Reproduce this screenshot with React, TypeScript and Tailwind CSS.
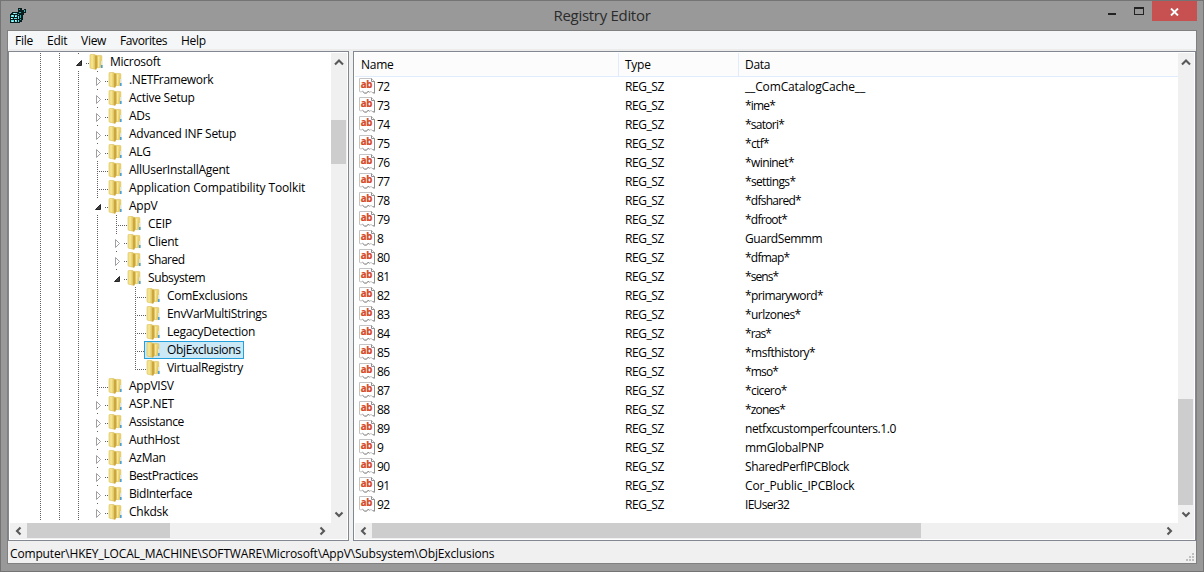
import React from "react";

type Kind = "open" | "closed" | "leaf";
type Node = { name: string; kind: Kind; guides: boolean[]; last?: boolean; tracking?: string };

const T = true;
const G2 = [T, T, T];
const G3 = [T, T, T, T];
const G4 = [T, T, T, T, false];

const nodes: Node[] = [
  { name: "Microsoft", kind: "open", guides: [T, T] },
  { name: ".NETFramework", kind: "closed", guides: G2, tracking: "tracking-[-0.36px]" },
  { name: "Active Setup", kind: "closed", guides: G2 },
  { name: "ADs", kind: "closed", guides: G2 },
  { name: "Advanced INF Setup", kind: "closed", guides: G2 },
  { name: "ALG", kind: "closed", guides: G2 },
  { name: "AllUserInstallAgent", kind: "leaf", guides: G2 },
  { name: "Application Compatibility Toolkit", kind: "leaf", guides: G2, tracking: "tracking-[-0.13px]" },
  { name: "AppV", kind: "open", guides: G2 },
  { name: "CEIP", kind: "leaf", guides: G3 },
  { name: "Client", kind: "closed", guides: G3 },
  { name: "Shared", kind: "closed", guides: G3, tracking: "tracking-[-0.5px]" },
  { name: "Subsystem", kind: "open", guides: G3, last: true, tracking: "tracking-[-0.4px]" },
  { name: "ComExclusions", kind: "leaf", guides: G4 },
  { name: "EnvVarMultiStrings", kind: "leaf", guides: G4, tracking: "tracking-[-0.32px]" },
  { name: "LegacyDetection", kind: "leaf", guides: G4 },
  { name: "ObjExclusions", kind: "leaf", guides: G4, tracking: "tracking-[-0.32px]" },
  { name: "VirtualRegistry", kind: "leaf", guides: G4, last: true, tracking: "tracking-[-0.34px]" },
  { name: "AppVISV", kind: "leaf", guides: G2 },
  { name: "ASP.NET", kind: "closed", guides: G2 },
  { name: "Assistance", kind: "closed", guides: G2, tracking: "tracking-[-0.36px]" },
  { name: "AuthHost", kind: "closed", guides: G2 },
  { name: "AzMan", kind: "closed", guides: G2 },
  { name: "BestPractices", kind: "closed", guides: G2, tracking: "tracking-[-0.45px]" },
  { name: "BidInterface", kind: "closed", guides: G2, tracking: "tracking-[-0.4px]" },
  { name: "Chkdsk", kind: "closed", guides: G2 },
];

const values: [string, string, string][] = [
  ["72", "__ComCatalogCache__", "tracking-[-0.15px]"],
  ["73", "*ime*", "tracking-[-0.8px]"],
  ["74", "*satori*", "tracking-[-0.75px]"],
  ["75", "*ctf*", "tracking-[-0.65px]"],
  ["76", "*wininet*", "tracking-[-0.6px]"],
  ["77", "*settings*", "tracking-[-0.65px]"],
  ["78", "*dfshared*", "tracking-[-0.75px]"],
  ["79", "*dfroot*", "tracking-[-0.75px]"],
  ["8", "GuardSemmm", "tracking-[-0.45px]"],
  ["80", "*dfmap*", "tracking-[-0.75px]"],
  ["81", "*sens*", "tracking-[-0.95px]"],
  ["82", "*primaryword*", "tracking-[-0.62px]"],
  ["83", "*urlzones*", "tracking-[-0.55px]"],
  ["84", "*ras*", "tracking-[-0.9px]"],
  ["85", "*msfthistory*", "tracking-[-0.52px]"],
  ["86", "*mso*", "tracking-[-0.85px]"],
  ["87", "*cicero*", "tracking-[-0.6px]"],
  ["88", "*zones*", "tracking-[-0.85px]"],
  ["89", "netfxcustomperfcounters.1.0", "tracking-[-0.43px]"],
  ["9", "mmGlobalPNP", "tracking-[-0.28px]"],
  ["90", "SharedPerfIPCBlock", "tracking-[-0.37px]"],
  ["91", "Cor_Public_IPCBlock", "tracking-[-0.14px]"],
  ["92", "IEUser32", "tracking-[-0.7px]"],
];

const dots = (from: number, to: number) => {
  const out: number[] = [];
  for (let i = from; i < to; i += 2) out.push(i);
  return out;
};

function Guide({ kind, last, line }: { kind?: Kind; last?: boolean; line?: boolean }) {
  const vertical = kind === undefined ? (line ? dots(0, 18) : []) : kind === "leaf" ? dots(0, last ? 11 : 18) : [0];
  const horizontal = kind === undefined ? [] : kind === "leaf" ? dots(11, 20) : [17, 19];
  return (
    <svg className="h-[18px] w-[19px] shrink-0 overflow-visible" viewBox="0 0 19 18" shapeRendering="crispEdges">
      {vertical.map((y) => (
        <rect key={"v" + y} x="9" y={y} width="1" height="1" fill="#606060" />
      ))}
      {horizontal.map((x) => (
        <rect key={"h" + x} x={x} y="10" width="1" height="1" fill="#606060" />
      ))}
      {kind === "closed" && (
        <path d="M8.5 6.5 L12.5 10.5 L8.5 14.5 Z" fill="#fff" stroke="#a0a0a0" shapeRendering="auto" />
      )}
      {kind === "open" && <path d="M12.5 7.5 V12.5 H7.5 Z" fill="#404040" stroke="#262626" strokeWidth="1" shapeRendering="auto" />}
    </svg>
  );
}

function Folder() {
  return (
    <svg className="h-[16px] w-[16px] shrink-0" viewBox="0 0 16 16">
      <defs>
        <linearGradient id="folder-front" x1="0" x2="1" y1="0" y2="0">
          <stop offset="0" stopColor="#f3e183" />
          <stop offset="0.4" stopColor="#f5e48f" />
          <stop offset="1" stopColor="#d4b044" />
        </linearGradient>
        <linearGradient id="folder-back" x1="0" x2="1" y1="0" y2="1">
          <stop offset="0" stopColor="#f3e28a" />
          <stop offset="1" stopColor="#e0c050" />
        </linearGradient>
      </defs>
      <path d="M7 1.4 H13 Q13.8 1.4 13.8 2.2 V13.6 H7 Z" fill="url(#folder-back)" stroke="#dfc567" strokeWidth="0.7" />
      <path d="M2 1.2 Q2 .5 2.8 .5 H6.6 L8.2 1.8 V15.4 L2.6 14.2 Q2 14 2 13.4 Z" fill="url(#folder-front)" stroke="#dcc05a" strokeWidth="0.6" />
      <path d="M7.2 2.2 L9 1.4 V14.2 L7.2 15.4 Z" fill="#c9a23a" />
      <path d="M9.3 2 V13.8" stroke="#dcbc55" strokeWidth="0.8" />
      <path d="M10.8 2.6 V13.2" stroke="#fbf1bb" strokeWidth="1" />
      <path d="M13 11 h1.6 v3 h-1.6 Z" fill="#45a0e0" />
      <path d="M13.2 7 h1.2 v4 h-1.2 Z" fill="#dcebf5" />
    </svg>
  );
}

function StringIcon() {
  return (
    <svg className="h-[16px] w-[16px] shrink-0" viewBox="0 0 16 16">
      <path d="M.5 .5 H12.5 L15.5 3.5 V15 L13.5 14.5 L12 13.5 L10.5 14.2 L9 13.2 L7.5 15.2 L5.5 15 L3.5 13.3 L2 14 L.5 13.5 Z" fill="#fff" stroke="#c4c4c4" />
      <path d="M12.5 .5 V3.5 H15.5 M15.5 3.5 V15.2 L13.5 14.6 M10.5 14.2 L9 13.3 L7.5 15.2 L5.5 15 L3.5 13.3" fill="none" stroke="#8f8f8f" />
      <text
        x="1.8"
        y="10.2"
        fill="#d6481f"
        stroke="#d6481f"
        strokeWidth=".2"
        fontSize="10"
        fontWeight="700"
        fontFamily="Open Sans, sans-serif"
        textLength="11.4"
        lengthAdjust="spacingAndGlyphs"
      >
        ab
      </text>
    </svg>
  );
}

function AppIcon() {
  return (
    <svg className="h-[16px] w-[16px]" viewBox="0 0 16 16" shapeRendering="crispEdges">
      <path d="M2 4h6v-1h4v3h1v6h-1v2h-2v1h-10v-9h1v-1h1z M8 0h4v3h-4z M12 2h2v-1h2v4h-2v2h-2z" fill="#081c1e" />
      <path d="M3 5h4v1h-4z M1 7h3v2h-3z M5 7h2v2h-2z M1 10h2v1h-2z M4 10h3v1h-3z M1 12h3v2h-3z M5 12h2v2h-2z M8 12h1v2h-1z M8 8h1v3h-1z" fill="#58e6ea" />
      <path d="M9 4h2v1h-2z M10 7h1v3h-1z M10 11h1v1h-1z M9 1h1v1h-1z M14 2h1v2h-1z M8 6h1v1h-1z" fill="#25b9be" />
      <path d="M2 7h1v1h-1z M5 8h1v1h-1z M2 13h1v1h-1z M5 12h1v1h-1z M4 5h1v1h-1z M1 10h1v1h-1z" fill="#eaffff" />
    </svg>
  );
}

const arrows = {
  up: "M1 7.5 L5 3.5 L9 7.5",
  down: "M1.5 2.5 L5 6 L8.5 2.5",
  left: "M6.5 1.5 L3 5 L6.5 8.5",
  right: "M3.5 1.5 L7 5 L3.5 8.5",
};

function Arrow({ dir }: { dir: keyof typeof arrows }) {
  return (
    <svg className="size-[10px] shrink-0" viewBox="0 0 10 10">
      <path d={arrows[dir]} fill="none" stroke="#585858" strokeWidth="2.1" />
    </svg>
  );
}

function VScroll({ before, thumb }: { before: string; thumb: string }) {
  return (
    <div className="flex w-[16px] shrink-0 flex-col bg-[#f0f0f0]">
      <div className="flex h-[17px] w-[15px] items-center justify-center">
        <Arrow dir="up" />
      </div>
      <div className={`shrink-0 ${before}`} />
      <div className={`w-[15px] shrink-0 bg-[#cdcdcd] ${thumb}`} />
      <div className="flex-1" />
      <div className="flex h-[17px] w-[15px] items-center justify-center">
        <Arrow dir="down" />
      </div>
    </div>
  );
}

function HScroll({ thumb }: { thumb: string }) {
  return (
    <div className="flex h-[16px] shrink-0 bg-[#f0f0f0] pr-[16px]">
      <div className="flex h-[15px] w-[17px] items-center justify-center">
        <Arrow dir="left" />
      </div>
      <div className={`h-[15px] bg-[#cdcdcd] ${thumb}`} />
      <div className="flex-1" />
      <div className="flex h-[15px] w-[19px] items-center justify-center">
        <Arrow dir="right" />
      </div>
    </div>
  );
}

function TreeRow({ node }: { node: Node }) {
  const selected = node.name === "ObjExclusions";
  return (
    <div className="flex h-[18px] shrink-0">
      {node.guides.map((line, i) => (
        <Guide key={i} line={line} />
      ))}
      <Guide kind={node.kind} last={node.last} />
      <div
        className={`-ml-px flex h-[18px] items-center border ${
          selected ? "w-[100px] border-[#26a0da] bg-[#cbe8f6]" : "border-transparent"
        }`}
      >
        <Folder />
        <span className={`ml-[6px] leading-[16px] ${node.tracking ?? "tracking-[-0.27px]"}`}>{node.name}</span>
      </div>
    </div>
  );
}

export default function App() {
  return (
    <div className="flex h-[572px] w-[1204px] flex-col overflow-hidden border border-[#747474] bg-[#999999] px-[6px] pb-[7px] font-['Open_Sans',sans-serif] text-[12px] tracking-[-0.27px] whitespace-nowrap text-black">
      <header className="flex h-[29px] shrink-0 items-start">
        <div className="w-[144px] pt-[7px] pl-[3px]">
          <AppIcon />
        </div>
        <h1 className="flex-1 pt-[3px] text-center text-[15px] leading-[22px] tracking-[-0.3px] text-[#2b2b2b]">Registry Editor</h1>
        <div className="flex w-[144px] shrink-0 justify-end">
          <svg className="h-[20px] w-[46px]" viewBox="0 0 46 20" shapeRendering="crispEdges">
            <rect x="2" y="12" width="8" height="2" fill="#222" />
            <path d="M28 6 H38 V14 H28 Z M29 8 V13 H37 V8 Z" fill="#222" fillRule="evenodd" />
          </svg>
          <div className="flex h-[20px] w-[45px] items-center justify-center bg-[#c75050] pt-px">
            <svg className="h-[8px] w-[9px]" viewBox="0 0 9 8">
              <path d="M1 .5 L8 7.5 M8 .5 L1 7.5" stroke="#fff" strokeWidth="1.9" />
            </svg>
          </div>
        </div>
      </header>

      <div className="flex min-h-0 flex-1 flex-col border border-[#808080] bg-[#f0f0f0]">
        <nav className="flex h-[18px] shrink-0 bg-[#f5f6f7] pl-[7px] leading-[19px]">
          <span className="w-[32px]">File</span>
          <span className="w-[34px]">Edit</span>
          <span className="w-[39px]">View</span>
          <span className="w-[61px] tracking-[-0.4px]">Favorites</span>
          <span>Help</span>
        </nav>
        <div className="h-[2px] shrink-0 bg-[#ececec]" />

        <main className="flex h-[490px] shrink-0 justify-between">
          <section className="flex w-[341px] flex-col border border-[#828790] bg-white p-px">
            <div className="flex min-h-0 flex-1">
              <div className="flex flex-1 flex-col overflow-hidden pl-[21px]">
                {nodes.map((n) => (
                  <TreeRow key={n.name} node={n} />
                ))}
              </div>
              <VScroll before="h-[50px]" thumb="h-[44px]" />
            </div>
            <HScroll thumb="w-[143px]" />
          </section>

          <section className="flex w-[843px] flex-col border border-[#828790] bg-white p-px">
            <div className="flex min-h-0 flex-1">
              <div className="flex flex-1 flex-col overflow-hidden">
                <div className="flex h-[24px] shrink-0 border-b border-[#e0ecfb] bg-[#fcfcfc] leading-[23px]">
                  <span className="w-[264px] border-r border-[#e0ecfb] pl-[6px]">Name</span>
                  <span className="w-[120px] border-r border-[#e0ecfb] pl-[6px]">Type</span>
                  <span className="pl-[6px]">Data</span>
                </div>
                {values.map(([name, data, tracking]) => (
                  <div key={name} className="flex h-[19px] shrink-0 items-start leading-[19px]">
                    <div className="flex w-[270px] items-start gap-[2px] pl-[4px]">
                      <div className="pt-px">
                        <StringIcon />
                      </div>
                      <span className="tracking-[-0.6px]">{name}</span>
                    </div>
                    <span className="w-[120px] tracking-[-0.45px]">REG_SZ</span>
                    <span className={tracking}>{data}</span>
                  </div>
                ))}
              </div>
              <VScroll before="h-[329px]" thumb="h-[106px]" />
            </div>
            <HScroll thumb="w-[549px]" />
          </section>
        </main>

        <footer className="flex flex-1 items-center justify-between pl-[2px]">
          <span className="pt-[4px] tracking-[-0.16px]">Computer\HKEY_LOCAL_MACHINE\SOFTWARE\Microsoft\AppV\Subsystem\ObjExclusions</span>
          <svg className="mr-[2px] mb-[2px] h-[8px] w-[8px] self-end" viewBox="0 0 8 8" shapeRendering="crispEdges">
            <path d="M6 0h2v2h-2z M3 3h2v2h-2z M6 3h2v2h-2z M0 6h2v2h-2z M3 6h2v2h-2z M6 6h2v2h-2z" fill="#bfbfbf" />
          </svg>
        </footer>
      </div>
    </div>
  );
}
